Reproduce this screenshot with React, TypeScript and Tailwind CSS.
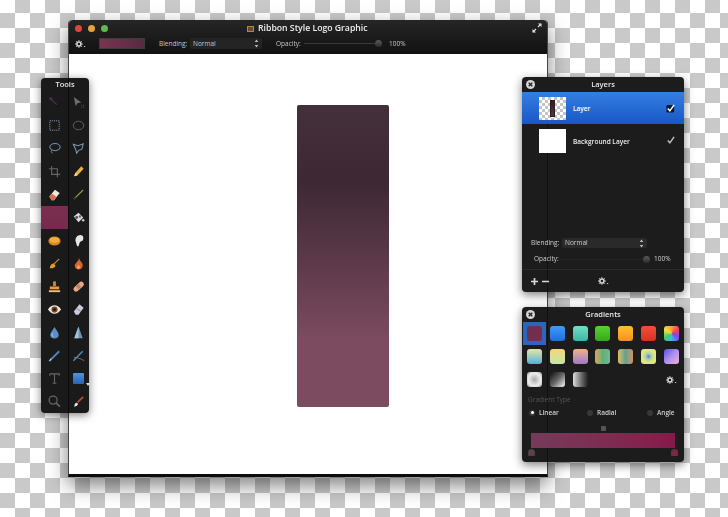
import React from 'react';

const font = { fontFamily: '"Open Sans", "Liberation Sans", sans-serif' };

// Little gear with the dropdown tick, used in the toolbars
const Gear = () => (
  <svg viewBox="0 0 14 10" className="w-[11px] h-[8px]">
    <circle cx="5" cy="5" r="2.6" fill="none" stroke="#d8d8d8" strokeWidth="2" />
    <path d="M5 0v1.5M5 8.5V10M0 5h1.5M8.5 5H10M1.5 1.5l1 1M7.5 7.5l1 1M1.5 8.5l1-1M7.5 2.5l1-1" stroke="#d8d8d8" strokeWidth="1.2" />
    <path d="M11 7.5h2.4l-1.2 1.6z" fill="#d8d8d8" />
  </svg>
);

const Close = () => (
  <svg viewBox="0 0 10 10" className="w-[9px] h-[9px]">
    <circle cx="5" cy="5" r="5" fill="#d6d6d6" />
    <path d="M3 3l4 4M7 3l-4 4" stroke="#222" strokeWidth="1.5" />
  </svg>
);

const Stepper = () => (
  <svg viewBox="0 0 5 9" className="w-[5px] h-[9px]">
    <path d="M2.5 0.5L4.3 3H0.7zM2.5 8.5L0.7 6h3.6z" fill="#bbb" />
  </svg>
);

const Check = ({ box }: { box?: boolean }) => (
  <svg viewBox="0 0 10 10" className="w-[9px] h-[9px]">
    {box && <rect x="0.5" y="1" width="8.5" height="8.5" rx="1.5" fill="#101522" />}
    <path d="M2 5l2.3 2.6L9 1" fill="none" stroke={box ? '#fff' : '#bdbdbd'} strokeWidth="1.7" />
  </svg>
);

const Knob = () => <div className="w-[7px] h-[7px] rounded-full bg-gradient-to-b from-[#5a5a5a] to-[#2c2c2c]" />;

const Svg = ({ children }: { children: React.ReactNode }) => (
  <svg viewBox="0 0 16 16" className="w-[15px] h-[15px]">{children}</svg>
);

const toolRows: (React.ReactNode | null)[][] = [
  [
    <Svg><path d="M4 4l7 7" stroke="#4a2a4a" strokeWidth="1.4" /><circle cx="11" cy="11" r="1" fill="#111" /><path d="M4 2v4M2 4h4" stroke="#5a3560" strokeWidth="0.8" /></Svg>,
    <Svg><path d="M3 2l8 6-4 .5L5 12z" fill="#6e6e6e" /><path d="M11 11h1M13 11h1M11 13h1M13 13h1" stroke="#555" /></Svg>,
  ],
  [
    <Svg><rect x="3" y="3" width="10" height="10" fill="none" stroke="#8f9bb0" strokeDasharray="1.2 1" /></Svg>,
    <Svg><ellipse cx="8" cy="8" rx="5.5" ry="4.5" fill="none" stroke="#8f9bb0" strokeDasharray="1.2 1" /></Svg>,
  ],
  [
    <Svg><ellipse cx="8.5" cy="6.5" rx="5.5" ry="3.8" fill="none" stroke="#6f93b5" strokeWidth="1.1" /><path d="M5 10c-1 1.500 0 3 1 3" fill="none" stroke="#6f93b5" /></Svg>,
    <Svg><path d="M2.500 3.500l5 1.500 5.500-2-1.500 6-3.500 1-2 3-1-4z" fill="none" stroke="#7f9ab0" strokeWidth="1.1" /></Svg>,
  ],
  [
    <Svg><path d="M5 2v9h9M2 5h9v9" fill="none" stroke="#666" strokeWidth="1.2" /></Svg>,
    <Svg><path d="M3.500 13l1-3.500 6.500-7 2.500 2.500-6.500 7z" fill="#e8b33a" /><path d="M3.500 13l1-3.500 2.500 2.500z" fill="#f5e2b8" /></Svg>,
  ],
  [
    <Svg><path d="M2.500 10l6-7 5 3.500-6 7.500H5z" fill="#f0e8e0" /><path d="M2.500 10l2.500-3 5 3.500-2.500 3.500H5z" fill="#d96f4a" /></Svg>,
    <Svg><path d="M3 13L13 3" stroke="#8fae3c" strokeWidth="1.3" /><path d="M3 13l2-2" stroke="#333" strokeWidth="1.3" /></Svg>,
  ],
  [
    null,
    <Svg><path d="M3 7l5-4 5 5-5 5z" fill="#d6dce2" /><circle cx="6" cy="8" r="1.500" fill="#555" /><circle cx="9.500" cy="7" r="1.300" fill="#666" /><circle cx="13" cy="11" r="1.300" fill="#c8ccd0" /></Svg>,
  ],
  [
    <Svg><ellipse cx="8" cy="8.500" rx="6.500" ry="4.800" fill="#d98a1f" /><ellipse cx="8" cy="7.500" rx="5" ry="3" fill="#f2ac3a" /></Svg>,
    <Svg><path d="M5 9c-1-4 2-7 5-7s4 3 2.500 6l-3 1.500L8 14H6.500z" fill="#e6e6e6" /></Svg>,
  ],
  [
    <Svg><path d="M13 3L7 9" stroke="#b98a50" strokeWidth="1.3" /><path d="M3 13c0-3 2-5.500 4-5l2 2c0 2-3 3.500-6 3z" fill="#e89a20" /></Svg>,
    <Svg><path d="M8.500 2C9 5 13 7 12.500 10.500 12 13.500 10 14.500 8 14.500S4 13 4 10.500C4 7.500 8 6 8.500 2z" fill="#d9662a" /><path d="M8 9c.5 1.500 2 2 1.500 3.500S6 14 6.500 12 8 10.500 8 9z" fill="#f0a860" /></Svg>,
  ],
  [
    <Svg><path d="M6.500 2.500h3v5h-3z" fill="#c98a3a" /><path d="M3 8h10v3H3z" fill="#e89c40" /><path d="M2 12h12v2H2z" fill="#efc27c" /></Svg>,
    <Svg><rect x="1.500" y="5.500" width="13" height="5.500" rx="2.700" transform="rotate(-42 8 8)" fill="#e8a888" /><rect x="6" y="6" width="4" height="4" transform="rotate(-42 8 8)" fill="#c67d60" /></Svg>,
  ],
  [
    <Svg><path d="M1 8c2-3.500 4.500-4.500 7-4.500S13 4.500 15 8c-2 3-4.500 4.500-7 4.500S3 11 1 8z" fill="#ece6df" /><circle cx="8" cy="8" r="3.300" fill="#7a4620" /><circle cx="8" cy="8" r="1.400" fill="#111" /></Svg>,
    <Svg><path d="M3 10l6-7.500 4.500 3.500L8 13.500H5z" fill="#cfc8da" /><path d="M5.500 6.500l5 3.500" stroke="#8b7f9c" /></Svg>,
  ],
  [
    <Svg><path d="M8 2c1.500 3 4.500 5.500 4.500 8.500S10 14.500 8 14.500 3.500 13.500 3.500 10.500 6.500 5 8 2z" fill="#5b8ec6" /><path d="M6 9c-1 1.500-.5 3 1 3.500" stroke="#bcd6ee" fill="none" /></Svg>,
    <Svg><path d="M8 1.500L12.500 14h-9z" fill="#6d93bb" /><path d="M8 1.500L8 14H3.500z" fill="#a8c3dc" /></Svg>,
  ],
  [
    <Svg><path d="M2.500 14L13 3.500" stroke="#4d87c2" strokeWidth="2" /><path d="M2.500 14l2-3" stroke="#c5dcf2" /></Svg>,
    <Svg><path d="M2.500 13.500L12.500 3.500" stroke="#4d87c2" strokeWidth="1.600" /><path d="M3 10c3 0 7 1 11 3.500" stroke="#888" strokeWidth="0.8" fill="none" /></Svg>,
  ],
  [
    <Svg><path d="M3 3h10v2M3 3v2M8 3v10M6 13h4" fill="none" stroke="#666" strokeWidth="1.200" /></Svg>,
    <div className="relative">
      <div className="w-[11px] h-[11px] bg-gradient-to-b from-[#4e94e0] to-[#2a63b4] rounded-[1px]" />
      <div className="absolute -right-[6px] -bottom-[2px] w-0 h-0 border-x-[2px] border-t-[3px] border-x-transparent border-t-[#ddd]" />
    </div>,
  ],
  [
    <Svg><circle cx="6.500" cy="6.500" r="4.300" fill="none" stroke="#666" strokeWidth="1.300" /><path d="M9.800 9.800l4 3.600" stroke="#666" strokeWidth="1.800" /></Svg>,
    <Svg><path d="M13 3L7 9" stroke="#a8502f" strokeWidth="2" /><path d="M3.500 13.500c0-2.500 1.500-4.500 3-4l1 1c0 1.500-2 3-4 3z" fill="#e6e6e6" /></Svg>,
  ],
];

const swatches = [
  ['bg-gradient-to-r from-[#6e3050] to-[#7a2c4d]', 'bg-gradient-to-b from-[#3f9bf5] to-[#1f6fe0]', 'bg-gradient-to-b from-[#6fe0c4] to-[#3cb8a4]', 'bg-gradient-to-b from-[#5ad032] to-[#35a81c]', 'bg-gradient-to-b from-[#fdc12e] to-[#f58f22]', 'bg-gradient-to-b from-[#f0503a] to-[#d92f22]', 'bg-[conic-gradient(#ff9f2e,#f23a6a,#7a4af0,#3ab8f0,#40d060,#f0e040,#ff9f2e)]'],
  ['bg-gradient-to-b from-[#e6e69a] to-[#46b0d8]', 'bg-gradient-to-b from-[#f4d47a] to-[#c4e8a8]', 'bg-gradient-to-b from-[#f0b080] to-[#a078c8]', 'bg-gradient-to-r from-[#d8a060] via-[#60b070] to-[#70b8a0]', 'bg-gradient-to-r from-[#d8c060] via-[#60a090] to-[#d09060]', 'bg-[radial-gradient(circle,#5a80d0_0%,#a8c8c0_25%,#dce87a_55%)]', 'bg-gradient-to-br from-[#5a50e0] via-[#b090f0] to-[#f0b0d0]'],
  ['bg-[radial-gradient(circle,#aaa_0%,#eee_60%,#999_100%)]', 'bg-gradient-to-br from-[#111] via-[#666] to-[#fff]', 'bg-gradient-to-r from-[#ddd] to-[#222]'],
];

const Radio = ({ on, label }: { on?: boolean; label: string }) => (
  <div className="flex items-center gap-[4px]">
    <div className={`w-[6px] h-[6px] rounded-full flex items-center justify-center ${on ? 'bg-[#3a3a3a]' : 'bg-[#383838]'}`}>
      {on && <div className="w-[3px] h-[3px] rounded-full bg-white" />}
    </div>
    <span className="text-[6.5px] font-semibold text-[#cfcfcf]">{label}</span>
  </div>
);

const PanelTitle = ({ title }: { title: string }) => (
  <div className="relative h-[15px] flex items-center justify-center text-[7.5px] font-semibold text-[#e8e8e8]">
    <div className="absolute left-[4px] top-[3px] flex"><Close /></div>
    {title}
  </div>
);

export default function App() {
  return (
    <div
      style={font}
      className="relative w-[728px] h-[517px] overflow-hidden blur-[0.35px] bg-[repeating-conic-gradient(#c9c9c9_0_25%,#ffffff_0_50%)] bg-[length:30px_30px] bg-[position:0_-2px]"
    >
      {/* Document window */}
      <div className="absolute left-[68px] top-[20px] w-[480px] h-[457px] flex flex-col bg-white rounded-t-[4px] border-x border-x-[#444] border-b-[3px] border-b-[#0c0c0c] shadow-[0_8px_20px_rgba(0,0,0,0.5)]">
        <div className="h-[34px] shrink-0 rounded-t-[4px] bg-gradient-to-b from-[#262626] to-[#111] flex flex-col">
          <div className="relative h-[15px] mt-[1px] flex items-center pl-[5.5px]">
            <div className="flex gap-[6px]">
              <div className="w-[7px] h-[7px] rounded-full bg-[#e0443e]" />
              <div className="w-[7px] h-[7px] rounded-full bg-[#e8a33a]" />
              <div className="w-[7px] h-[7px] rounded-full bg-[#62b84a]" />
            </div>
            <div className="ml-[139px] w-[7px] h-[6px] border border-[#c4822e] bg-[#6a4a24]" />
            <span className="ml-[4.5px] text-[8.7px] font-semibold text-[#efefef]">Ribbon Style Logo Graphic</span>
            <svg viewBox="0 0 10 10" className="absolute right-[5px] top-[2px] w-[10px] h-[10px]">
              <path d="M1 9l3-3M9 1L6 4" stroke="#ddd" strokeWidth="1.200" />
              <path d="M0.500 9.500V6L4 9.500zM9.500 0.500V4L6 0.500z" fill="#ddd" />
            </svg>
          </div>
          <div className="h-[15px] flex items-center pl-[6px] text-[6.5px] text-[#c8c8c8]">
            <Gear />
            <div className="ml-[13px] w-[46px] h-[11px] bg-gradient-to-r from-[#7a3452] to-[#582a40] border border-[#3c3c3c]" />
            <span className="ml-[14px] w-[27px]">Blending:</span>
            <div className="ml-[4px] w-[72px] h-[11px] flex items-center justify-between px-[3px] bg-[#242424] rounded-[2px]">
              <span>Normal</span>
              <Stepper />
            </div>
            <span className="ml-[14px] w-[24px]">Opacity:</span>
            <div className="ml-[4px] w-[71px] h-px bg-[#3a3a3a]" />
            <Knob />
            <span className="ml-[7px]">100%</span>
          </div>
        </div>

        {/* Canvas */}
        <div className="flex-1 flex items-start pt-[51px] pl-[228px]">
          <div className="w-[92px] h-[302px] rounded-[2px] bg-gradient-to-b from-[#44303a] via-[#3d2833] via-25% to-[#7c4b5f] to-78%" />
        </div>
      </div>

      {/* Tools palette */}
      <div className="absolute left-[41px] top-[78px] w-[48px] h-[335px] rounded-[4px] bg-[#1a1a1b] shadow-[0_2px_8px_rgba(0,0,0,0.5)]">
        <div className="absolute left-[27px] top-0 bottom-0 w-px bg-[#0a0a0a]" />
        <div className="relative h-[13px] flex items-center justify-center text-[7.5px] font-semibold text-[#e8e8e8]">Tools</div>
        <div className="relative grid grid-cols-[27px_21px] auto-rows-[23px]">
          {toolRows.map((row, r) =>
            row.map((icon, c) => (
              <div key={`${r}-${c}`} className={`flex items-center justify-center ${icon === null ? 'bg-gradient-to-b from-[#7a2f50] to-[#752b4c]' : ''}`}>
                {icon}
              </div>
            ))
          )}
        </div>
      </div>

      {/* Layers panel */}
      <div className="absolute left-[522px] top-[77px] w-[162px] h-[215px] flex flex-col rounded-[4px] bg-[#1c1c1d] shadow-[0_3px_10px_rgba(0,0,0,0.5)]">
        <div className="absolute left-[25px] top-[47px] bottom-0 w-px bg-[#101010]" />
        <PanelTitle title="Layers" />
        <div className="relative h-[32px] flex items-center pl-[17px] pr-[9px] bg-gradient-to-b from-[#347fe2] to-[#1a57c6]">
          <div className="w-[27px] h-[23px] flex justify-center bg-[repeating-conic-gradient(#c4c4c4_0_25%,#ffffff_0_50%)] bg-[length:6px_6px]">
            <div className="mt-[3px] w-[5px] h-[17px] bg-gradient-to-b from-[#3a1a22] to-[#6a2a3a] border border-[#222]" />
          </div>
          <span className="ml-[7px] pt-[1px] flex-1 text-[6.5px] font-semibold text-white">Layer</span>
          <Check box />
        </div>
        <div className="relative h-[33px] flex items-center pl-[17px] pr-[9px]">
          <div className="w-[27px] h-[24px] bg-white" />
          <span className="ml-[7px] pt-[3px] flex-1 text-[6.5px] font-semibold text-[#ececec]">Background Layer</span>
          <Check />
        </div>
        <div className="relative mt-[78px] h-[16px] flex items-center pl-[9px] pr-[9px] text-[6.5px] text-[#cfcfcf]">
          <span className="w-[27px]">Blending:</span>
          <div className="ml-[4px] w-[85px] h-[10px] flex items-center justify-between px-[3px] bg-[#2a2a2a] rounded-[2px]">
            <span>Normal</span>
            <Stepper />
          </div>
        </div>
        <div className="relative h-[16px] flex items-center pl-[12px] text-[6.5px] text-[#cfcfcf]">
          <span className="w-[24px]">Opacity:</span>
          <div className="ml-[1px] w-[84px] h-px bg-[#262626]" />
          <Knob />
          <span className="ml-[4px]">100%</span>
        </div>
        <div className="relative mt-auto h-[23px] flex items-center pl-[9px] border-t border-t-[#2a2a2a]">
          <svg viewBox="0 0 18 7" className="w-[18px] h-[7px]">
            <path d="M3.500 0v7M0 3.500h7M11 3.500h7" stroke="#d8d8d8" strokeWidth="1.700" />
          </svg>
          <div className="ml-[49px] flex"><Gear /></div>
        </div>
      </div>

      {/* Gradients panel */}
      <div className="absolute left-[522px] top-[307px] w-[162px] h-[155px] rounded-[4px] bg-[#1c1c1d] shadow-[0_3px_10px_rgba(0,0,0,0.5)]">
        <div className="absolute left-[25px] top-0 bottom-0 w-px bg-[#101010]" />
        <PanelTitle title="Gradients" />
        <div className="relative mt-[4px] ml-[5px] grid grid-cols-[repeat(7,15px)] auto-rows-[15px] gap-x-[7.8px] gap-y-[8px]">
          {swatches.map((row, r) =>
            row.map((cls, c) => (
              <div key={`${r}-${c}`} className="relative">
                {r === 0 && c === 0 && <div className="absolute -inset-[4px] bg-[#2a66bd]" />}
                <div className={`relative w-[15px] h-[15px] rounded-[3px] ${cls}`} />
              </div>
            ))
          )}
          <div className="col-start-7 row-start-3 flex items-center justify-center"><Gear /></div>
        </div>
        <div className="relative mt-[8px] pl-[6px] text-[6.5px] text-[#555]">Gradient Type</div>
        <div className="relative mt-[3px] pl-[7px] grid grid-cols-[58px_60px_auto]">
          <Radio on label="Linear" />
          <Radio label="Radial" />
          <Radio label="Angle" />
        </div>
        <div className="relative mt-[8px] flex justify-center">
          <div className="w-[5px] h-[5px] rounded-[1px] bg-[#555]" />
        </div>
        <div className="relative mt-[2px] mx-[9px] h-[15px] bg-gradient-to-r from-[#763a5a] to-[#86194a]" />
        <div className="relative mt-[1px] mx-[6px] flex justify-between">
          <div className="w-[7px] h-[7px] rounded-t-[3px] bg-[#6a3a50] border border-[#444]" />
          <div className="w-[7px] h-[7px] rounded-t-[3px] bg-[#8a2048] border border-[#444]" />
        </div>
      </div>
    </div>
  );
}
